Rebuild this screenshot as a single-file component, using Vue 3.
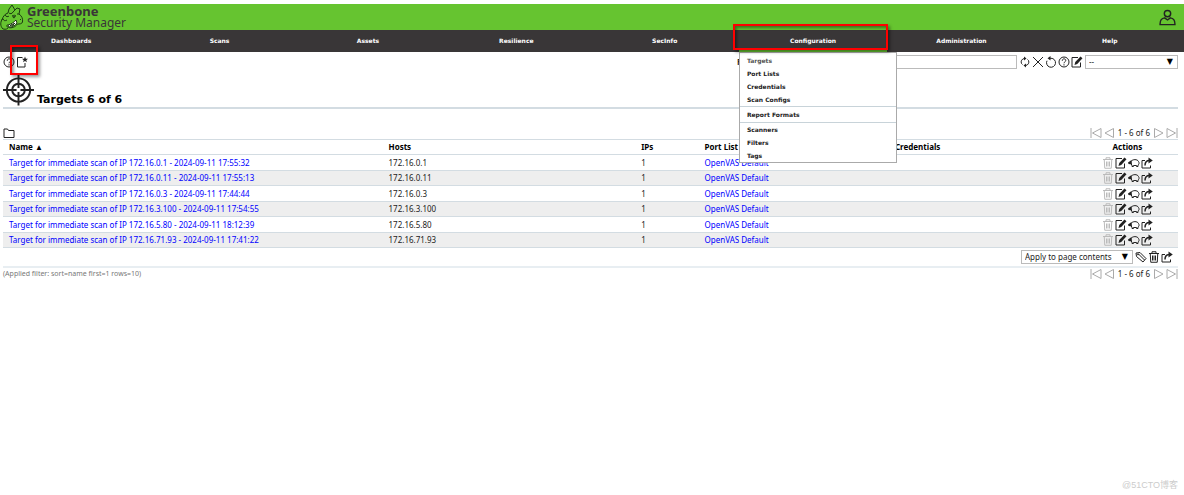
<script setup>
const menus = ['Dashboards', 'Scans', 'Assets', 'Resilience', 'SecInfo', 'Configuration', 'Administration', 'Help']
const submenu = ['Targets', 'Port Lists', 'Credentials', 'Scan Configs', 'Report Formats', 'Scanners', 'Filters', 'Tags']
const targets = [
  { ip: '172.16.0.1', time: '17:55:32' },
  { ip: '172.16.0.11', time: '17:55:13' },
  { ip: '172.16.0.3', time: '17:44:44' },
  { ip: '172.16.3.100', time: '17:54:55' },
  { ip: '172.16.5.80', time: '18:12:39' },
  { ip: '172.16.71.93', time: '17:41:22' },
]
const filterTools = [
  ['refresh', 'Update filter'],
  ['close', 'Remove filter'],
  ['reset', 'Reset filter'],
  ['help', 'Filter help'],
  ['edit', 'Edit filter'],
]
const rowTools = [
  ['trash', 'Delete'],
  ['edit', 'Edit'],
  ['clone', 'Clone'],
  ['export', 'Export'],
]
</script>

<template>
  <div class="page">
    <svg class="sprite" aria-hidden="true">
      <symbol id="help" viewBox="0 0 24 24">
        <circle cx="12" cy="12" r="10" />
        <path d="M8.500 9.500c0-5 7-5 7-.6 0 2.800-3.500 2.800-3.500 5.600M12 16.500v2.500" />
      </symbol>
      <symbol id="new" viewBox="0 0 24 24">
        <path d="M13 3H3v19h15v-8" />
        <path class="solid" d="M18 1l1.700 4.300 4.300.2-3.400 2.800 1.200 4.400L18 10.200l-3.800 2.500 1.200-4.400L12 5.500l4.300-.2z" />
      </symbol>
      <symbol id="refresh" viewBox="0 0 24 24">
        <path d="M11 5a7 7 0 0 0-6 10l2 2M13 19a7 7 0 0 0 6-10l-2-2" />
        <path class="solid" d="M10 1l5 4-5 4zM14 23l-5-4 5-4z" />
      </symbol>
      <symbol id="close" viewBox="0 0 24 24"><path d="M2 2l20 20M22 2L2 22" /></symbol>
      <symbol id="reset" viewBox="0 0 24 24">
        <path d="M10 4.500h2a9 9 0 1 1-8 5" />
        <path class="solid" d="M11 0v9L5 4.500z" />
      </symbol>
      <symbol id="edit" viewBox="0 0 24 24">
        <path d="M14 3H2v19h17v-9" />
        <path class="solid" d="M7 18l1.500-6L19 1l4 3.500L12.500 16z" />
      </symbol>
      <symbol id="trash" viewBox="0 0 24 24">
        <path d="M2 5h20M8 5V1.500h8V5M4.500 5l1 17.500h13l1-17.500M9 9v10M12 9v10M15 9v10" />
      </symbol>
      <symbol id="clone" viewBox="0 0 24 24">
        <path d="M6 9c3-5 13-5 15 0 2 3 1 6-1 7v3h-3v-2h-6v2H8v-3l-3-3" />
        <path class="solid" d="M0 11l7-5 1 9-7-1z" />
      </symbol>
      <symbol id="export" viewBox="0 0 24 24">
        <path d="M8 7H2v15h17v-5" />
        <path d="M8 17c0-7 3-10 9-10" class="thick" />
        <path class="solid" d="M15 1l8.500 6-8.500 6z" />
      </symbol>
      <symbol id="tag" viewBox="0 0 24 24">
        <path d="M2 4l8-1 12 12-6 7L3 11zM6 5l13 13" />
        <circle cx="6" cy="7" r="1" />
      </symbol>
      <symbol id="folder" viewBox="0 0 24 24"><path d="M2 21V4h7l2 3h11v14z" /></symbol>
      <symbol id="first" viewBox="0 0 24 24"><path d="M2 2v20M22 3v18L5 12z" /></symbol>
      <symbol id="prev" viewBox="0 0 24 24"><path d="M21 3v18L4 12z" /></symbol>
      <symbol id="next" viewBox="0 0 24 24"><path d="M3 3v18l17-9z" /></symbol>
      <symbol id="last" viewBox="0 0 24 24"><path d="M22 2v20M2 3v18l17-9z" /></symbol>
      <symbol id="user" viewBox="0 0 24 24">
        <circle cx="12" cy="6.500" r="4.500" />
        <path d="M8 12.500c-4 .5-6.500 3-6.500 8.500v1h21v-1c0-5.500-2.500-8-6.500-8.500l-4 3z" />
      </symbol>
      <symbol id="target" viewBox="0 0 32 32">
        <circle cx="16" cy="16" r="12" />
        <circle cx="16" cy="16" r="6.500" />
        <path d="M16 0v14M16 18v14M0 16h14M18 16h14" />
      </symbol>
      <symbol id="dragon" viewBox="0 0 24 26">
        <path d="M3 25C0 22 0 18 3 14M2 16c1-4 3-6 6-7L9 5l3-4 3 5-2 2 4-4 3 1-1 5c3 2 4 5 3.500 8-.5 2-3 2-5 2-2 3-6 4.500-9 3.500-2-.5-2-2-1-3M9 9c1 1 3 1 4-1M5 11c1 2 3 2 4 1M3 15c1 2 2 2 4 1M17 10l2 0M8 24c-2 2-4 1-5 1" />
        <path class="teeth" d="M8 21c4-1 6-3 8-5l1 3c-2 3-5 4-8 4z" />
        <path d="M10 21l1 1 1-2 1 2 1-3 1 1M20 15l1 1M12 12c2-1 3-1 4 0" />
        <path class="solid" d="M12 12.500l4-.5-2 2.500z" />
      </symbol>
    </svg>

    <header class="banner">
      <a class="brand" href="#">
        <svg class="dragon"><use href="#dragon" /></svg>
        <span class="brand-text"><strong>Greenbone</strong><span>Security Manager</span></span>
      </a>
      <button class="user" aria-label="User menu"><svg><use href="#user" /></svg></button>
    </header>

    <nav class="nav">
      <ul class="menu">
        <li v-for="m in menus" :key="m" :class="{ open: m === 'Configuration' }">
          <a href="#">{{ m }}</a>
          <template v-if="m === 'Configuration'">
            <ul class="dropdown">
              <li v-for="s in submenu" :key="s" :class="{ current: s === 'Targets', ruled: s === 'Report Formats' }">
                <a href="#">{{ s }}</a>
              </li>
            </ul>
            <span class="mark mark-menu"></span>
          </template>
        </li>
      </ul>
    </nav>

    <main class="content">
      <div class="toolbar">
        <div class="tools">
          <button aria-label="Help"><svg class="icon"><use href="#help" /></svg></button>
          <span class="marked">
            <button aria-label="New Target"><svg class="icon"><use href="#new" /></svg></button>
            <span class="mark mark-new"></span>
          </span>
        </div>
        <form class="filter" @submit.prevent>
          <label for="filter">Filter</label>
          <input id="filter" type="text" />
          <div class="tools">
            <button v-for="[icon, name] in filterTools" :key="icon" type="button" :aria-label="name">
              <svg class="icon"><use :href="'#' + icon" /></svg>
            </button>
          </div>
          <span class="select named"><select aria-label="Saved filter"><option>--</option></select></span>
        </form>
      </div>

      <div class="title">
        <svg><use href="#target" /></svg>
        <h1>Targets 6 of 6</h1>
      </div>

      <div class="bar bar-top">
        <button aria-label="Details"><svg class="icon"><use href="#folder" /></svg></button>
        <div class="pager">
          <button aria-label="First"><svg class="icon"><use href="#first" /></svg></button>
          <button aria-label="Previous"><svg class="icon"><use href="#prev" /></svg></button>
          <span>1 - 6 of 6</span>
          <button aria-label="Next"><svg class="icon"><use href="#next" /></svg></button>
          <button aria-label="Last"><svg class="icon"><use href="#last" /></svg></button>
        </div>
      </div>

      <table>
        <colgroup>
          <col class="c-name" /><col class="c-hosts" /><col class="c-ips" /><col class="c-ports" /><col class="c-cred" /><col />
        </colgroup>
        <thead>
          <tr><th>Name ▲</th><th>Hosts</th><th>IPs</th><th>Port List</th><th>Credentials</th><th class="center">Actions</th></tr>
        </thead>
        <tbody>
          <tr v-for="t in targets" :key="t.ip">
            <td><a href="#">Target for immediate scan of IP {{ t.ip }} - 2024-09-11 {{ t.time }}</a></td>
            <td>{{ t.ip }}</td>
            <td>1</td>
            <td><a href="#">OpenVAS Default</a></td>
            <td></td>
            <td>
              <div class="tools center">
                <button v-for="[icon, name] in rowTools" :key="icon" :aria-label="name" :disabled="icon === 'trash'">
                  <svg class="icon"><use :href="'#' + icon" /></svg>
                </button>
              </div>
            </td>
          </tr>
        </tbody>
      </table>

      <div class="bulk">
        <span class="select apply"><select aria-label="Bulk scope"><option>Apply to page contents</option></select></span>
        <div class="tools">
          <button aria-label="Add tag"><svg class="icon"><use href="#tag" /></svg></button>
          <button aria-label="Move to trashcan"><svg class="icon"><use href="#trash" /></svg></button>
          <button aria-label="Export"><svg class="icon"><use href="#export" /></svg></button>
        </div>
      </div>

      <div class="bar">
        <small>(Applied filter: sort=name first=1 rows=10)</small>
        <div class="pager">
          <button aria-label="First"><svg class="icon"><use href="#first" /></svg></button>
          <button aria-label="Previous"><svg class="icon"><use href="#prev" /></svg></button>
          <span>1 - 6 of 6</span>
          <button aria-label="Next"><svg class="icon"><use href="#next" /></svg></button>
          <button aria-label="Last"><svg class="icon"><use href="#last" /></svg></button>
        </div>
      </div>
    </main>
    <footer class="credit">@51CTO博客</footer>
  </div>
</template>

<style>
body {
  background: #fff;
}
</style>

<style scoped>
.page {
  box-sizing: border-box;
  display: flex;
  flex-direction: column;
  min-height: 100vh;
  padding-top: 4px;
  overflow: hidden;
  color: #222;
  font: 8px/12px "Noto Sans", "Open Sans", sans-serif;
}
.sprite {
  position: absolute;
  width: 0;
  height: 0;
}
svg {
  display: block;
  fill: none;
  stroke: currentColor;
  stroke-width: 2;
}
.solid {
  fill: currentColor;
  stroke: none;
}
.teeth {
  fill: #fff;
}
.thick {
  stroke-width: 3;
}
button {
  display: block;
  padding: 0;
  border: 0;
  background: none;
  color: #222;
}
button:disabled {
  color: #bbb;
}
a {
  color: #00f;
  text-decoration: none;
}
.icon {
  width: 12px;
  height: 12px;
}
.banner {
  display: flex;
  justify-content: space-between;
  height: 26px;
  background: #66c430;
}
.brand {
  display: flex;
  gap: 3px;
  color: #393637;
}
.dragon {
  width: 24px;
  height: 26px;
  color: #1c3a12;
  stroke-width: 1;
}
.brand-text {
  display: flex;
  flex-direction: column;
  padding-top: 1px;
  font: 12px/12px "Noto Sans", sans-serif;
}
.brand-text strong {
  font-size: 13px;
}
.user {
  padding: 0 8px;
}
.user svg {
  width: 17px;
  height: 17px;
}
.nav {
  background: #393637;
}
.menu {
  display: flex;
  margin: 0 0 0 -3px;
  padding: 0;
  list-style: none;
  font: bold 6px/22px "DejaVu Sans", sans-serif;
}
.menu > li {
  position: relative;
  flex: 1;
  text-align: center;
}
.menu > li > a {
  display: block;
  color: #fff;
}
.menu > .open > a {
  box-shadow: inset 0 -2px #66c430;
}
.dropdown {
  position: absolute;
  z-index: 1;
  top: 100%;
  left: 0;
  box-sizing: border-box;
  width: 158px;
  margin: 0;
  padding: 1px 0 0;
  border: 1px solid #aaa;
  background: #fff;
  list-style: none;
  line-height: 13px;
  text-align: left;
}
.dropdown a {
  display: block;
  padding-left: 7px;
  color: #222;
}
.dropdown .current a {
  color: #555;
}
.ruled {
  padding: 1px 0;
  border: solid #c8d3d9;
  border-width: 1px 0;
}
.mark {
  position: absolute;
  z-index: 2;
  border: 2px solid #f00;
  box-shadow: 2px 2px 3px #0006, inset 2px 2px 3px #0006;
  pointer-events: none;
}
.mark-menu {
  inset: -6px -1px 2px -6px;
}
.mark-new {
  inset: -11px -10px -7px -6px;
}
.marked {
  position: relative;
}
.content {
  padding: 3px 6px 0 3px;
}
.toolbar,
.filter,
.tools,
.pager,
.bar,
.bulk {
  display: flex;
  align-items: center;
}
.toolbar,
.bar {
  justify-content: space-between;
}
.tools {
  gap: 1px;
}
.pager {
  gap: 1px;
}
.pager span {
  padding: 0 2px;
}
.filter {
  gap: 2px;
}
.filter label {
  width: 40px;
  font-weight: bold;
}
.filter input {
  box-sizing: border-box;
  width: 238px;
  height: 14px;
  border: 1px solid #bbb;
}
.select {
  position: relative;
  display: block;
}
.select::after {
  content: "▼";
  position: absolute;
  right: 5px;
  top: 1px;
  font-family: "DejaVu Sans", sans-serif;
  color: #000;
}
.select select {
  display: block;
  box-sizing: border-box;
  width: 100%;
  height: 14px;
  padding: 0 3px;
  border: 1px solid #bbb;
  appearance: none;
  background: #fff;
  color: #222;
  font: inherit;
}
.named {
  width: 93px;
}
.apply {
  width: 112px;
}
.title {
  display: flex;
  align-items: flex-end;
  gap: 3px;
  margin-top: 5px;
  padding-bottom: 1px;
  border-bottom: 2px solid #d3dce2;
}
.title svg {
  width: 31px;
  height: 32px;
}
h1 {
  margin: 0;
  color: #000;
  font: bold 11px/13px "DejaVu Sans", sans-serif;
}
.bar-top {
  margin-top: 18px;
}
.bar small {
  color: #777;
  font-size: 7px;
}
.pager button {
  color: #aaa;
}
table {
  width: 100%;
  border-collapse: collapse;
  table-layout: fixed;
  border-top: 1px solid #d3dce2;
}
.c-name {
  width: 32.3%;
}
.c-hosts {
  width: 21.5%;
}
.c-ips {
  width: 5.4%;
}
.c-ports {
  width: 16.2%;
}
.c-cred {
  width: 16%;
}
th,
td {
  box-sizing: border-box;
  height: 15px;
  padding: 0 6px;
  border-bottom: 1px solid #d3dce2;
  text-align: left;
  white-space: nowrap;
}
th {
  color: #000;
}
tbody tr:nth-child(odd) td {
  height: 16px;
}
tbody tr:nth-child(even) {
  background: #eee;
}
.center {
  justify-content: center;
  text-align: center;
}
.bulk {
  justify-content: flex-end;
  gap: 2px;
  padding: 2px 5px 2px 0;
  border-bottom: 2px solid #e8eef2;
}
.credit {
  margin-top: auto;
  padding: 0 6px 4px;
  color: #ccc;
  font: 9px/12px "Liberation Sans", "Noto Sans CJK SC", sans-serif;
  text-align: right;
}
</style>
